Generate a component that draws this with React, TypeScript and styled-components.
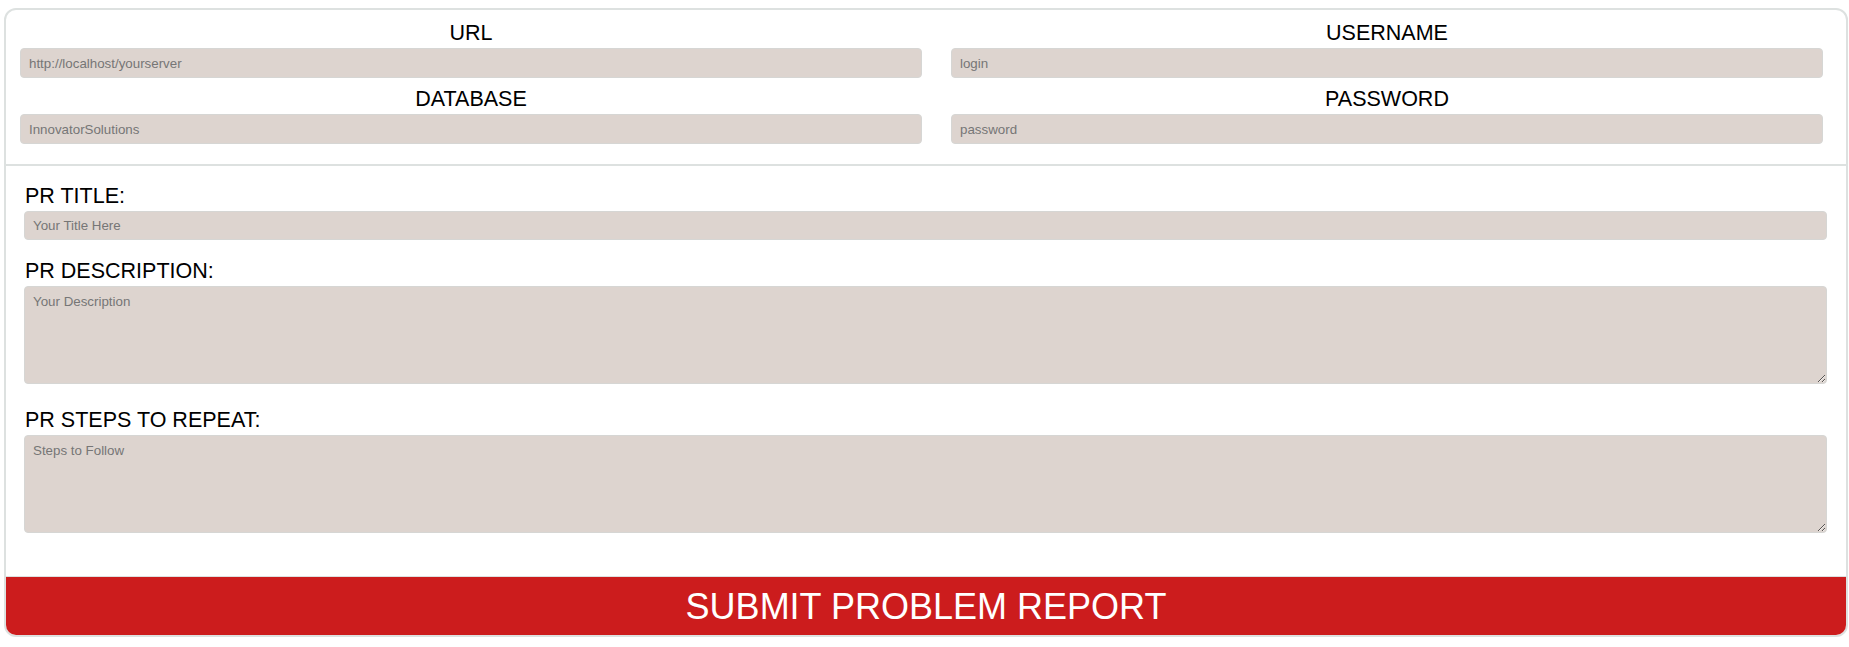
import React from "react";
import styled, { createGlobalStyle } from "styled-components";

const GlobalStyle = createGlobalStyle`
  body {
    margin: 0;
    background: #ffffff;
    font-family: "Liberation Sans", Arial, sans-serif;
  }
`;

const Card = styled.form`
  margin: 8px 1px 8px 4px;
  border: 2px solid #dde1e0;
  border-radius: 12px;
  background: #ffffff;
  overflow: hidden;
`;

const ServerGrid = styled.div`
  display: grid;
  grid-template-columns: 902fr 872fr;
  column-gap: 29px;
  row-gap: 9px;
  padding: 11px 23px 20px 14px;
  border-bottom: 2px solid #dde1e0;
`;

const Field = styled.div`
  display: flex;
  flex-direction: column;
`;

const ServerLabel = styled.label`
  display: block;
  text-align: center;
  font-size: 21.5px;
  line-height: 24px;
  color: #000;
  margin-bottom: 3px;
`;

const Input = styled.input<{ $h?: number }>`
  box-sizing: border-box;
  width: 100%;
  height: ${(p) => p.$h ?? 30}px;
  padding: 0 8px;
  border: 1px solid #d6d6d4;
  border-radius: 4px;
  background: #ddd4cf;
  font-family: "Liberation Sans", Arial, sans-serif;
  font-size: 13.33px;
  color: #333;
  outline: none;

  &::placeholder {
    color: #767676;
  }
`;

const ReportBody = styled.div`
  display: flex;
  flex-direction: column;
  gap: 19px;
  padding: 18px 19px 38px 18px;
`;

const ReportLabel = styled.label`
  display: block;
  font-size: 21.5px;
  line-height: 24px;
  color: #000;
  padding-left: 1px;
  margin-bottom: 3px;
`;

const TextArea = styled.textarea`
  display: block;
  box-sizing: border-box;
  width: 100%;
  height: 98px;
  margin: 0 0 5px;
  padding: 7px 8px;
  border: 1px solid #d6d6d4;
  border-radius: 4px;
  background: #ddd4cf;
  font-family: "Liberation Sans", Arial, sans-serif;
  font-size: 13.33px;
  color: #333;
  outline: none;

  &::placeholder {
    color: #767676;
  }
`;

const SubmitButton = styled.button`
  display: block;
  width: 100%;
  height: 59px;
  margin: 0;
  border: none;
  border-top: 1px solid #dde1e0;
  background: #cc1c1d;
  color: #ffffff;
  font-family: "Liberation Sans", Arial, sans-serif;
  font-size: 36px;
  line-height: 57px;
  cursor: pointer;
`;

const serverFields = [
  { label: "URL", placeholder: "http://localhost/yourserver" },
  { label: "USERNAME", placeholder: "login" },
  { label: "DATABASE", placeholder: "InnovatorSolutions" },
  { label: "PASSWORD", placeholder: "password" },
];

export default function App() {
  return (
    <>
      <GlobalStyle />
      <Card onSubmit={(e) => e.preventDefault()}>
        <ServerGrid>
          {serverFields.map((f) => (
            <Field key={f.label}>
              <ServerLabel>{f.label}</ServerLabel>
              <Input
                type={f.label === "PASSWORD" ? "password" : "text"}
                placeholder={f.placeholder}
              />
            </Field>
          ))}
        </ServerGrid>
        <ReportBody>
          <Field>
            <ReportLabel>PR TITLE:</ReportLabel>
            <Input $h={29} placeholder="Your Title Here" />
          </Field>
          <Field>
            <ReportLabel>PR DESCRIPTION:</ReportLabel>
            <TextArea placeholder="Your Description" />
          </Field>
          <Field>
            <ReportLabel>PR STEPS TO REPEAT:</ReportLabel>
            <TextArea placeholder="Steps to Follow" />
          </Field>
        </ReportBody>
        <SubmitButton type="submit">SUBMIT PROBLEM REPORT</SubmitButton>
      </Card>
    </>
  );
}
